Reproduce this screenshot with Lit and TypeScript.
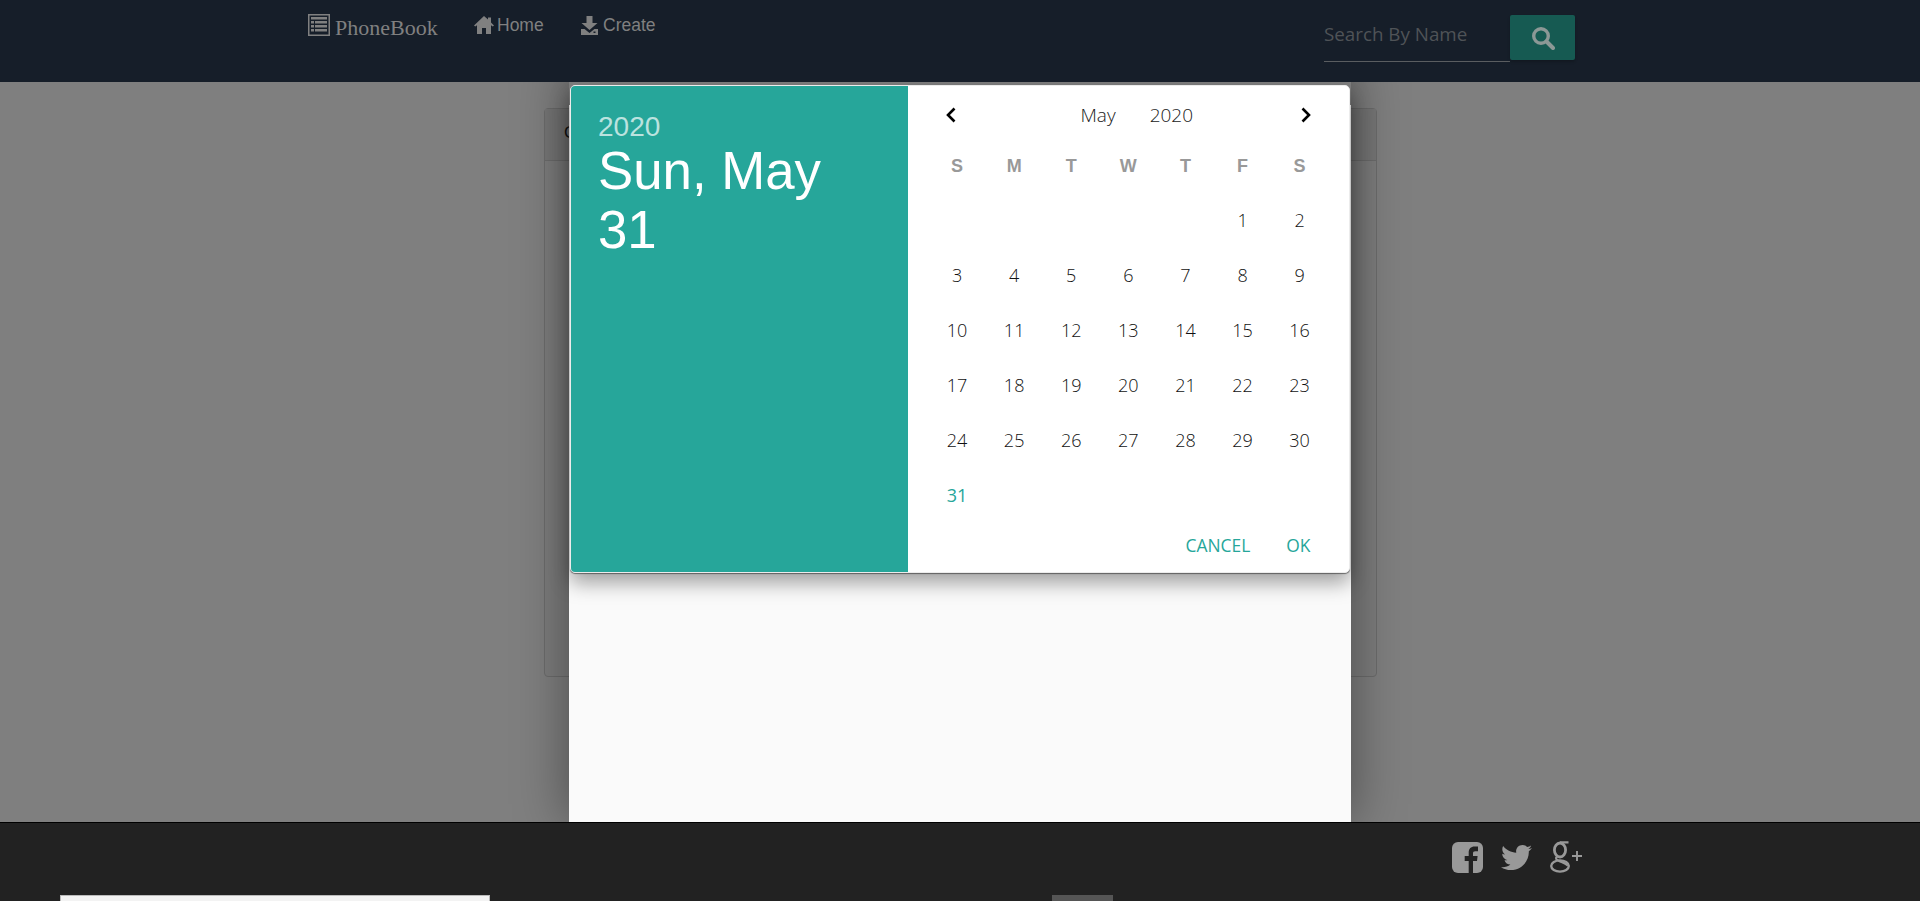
import { LitElement, html, css, svg } from 'lit'
import { customElement } from 'lit/decorators.js'

const WEEKDAYS = ['S', 'M', 'T', 'W', 'T', 'F', 'S']
const LEADING_BLANKS = 5
const DAYS_IN_MONTH = 31

const listIcon = svg`<path fill-rule="evenodd" d="M0 0h22v22H0zM1.5 1.5v19h19v-19zM3 3h16v2.5H3zM3 7h3v2.5H3zM7 7h12v2.5H7zM3 11h3v2.5H3zM7 11h12v2.5H7zM3 15h3v2.5H3zM7 15h12v2.5H7z"/>`
const homeIcon = svg`<path d="M10 0 L14 3.6 V1.5 H17 V6.4 L20 9.4 L18.8 10.6 L17 9.2 V18 H12 V12 H8 V18 H3 V9.2 L1.2 10.6 L0 9.4 Z"/>`
const downloadIcon = svg`<path fill-rule="evenodd" d="M5.5 0h6v7h5l-8 7-8-7h5zM0 13h3.5l5 4 5-4H17v6H0zM12.5 15.5h2v1.5h-2z"/>`
const searchIcon = svg`<circle cx="10" cy="10" r="7.3" fill="none" stroke="currentColor" stroke-width="3.4"/><path d="M15.5 15.5 L22 22" stroke="currentColor" stroke-width="4" stroke-linecap="round"/>`
const twitterIcon = svg`<path d="M459.37 151.716c.325 4.548.325 9.097.325 13.645 0 138.72-105.583 298.558-298.558 298.558-59.452 0-114.68-17.219-161.137-47.106 8.447.974 16.568 1.299 25.34 1.299 49.055 0 94.213-16.568 130.274-44.832-46.132-.975-84.792-31.188-98.112-72.772 6.498.974 12.995 1.624 19.818 1.624 9.421 0 18.843-1.3 27.614-3.573-48.081-9.747-84.143-51.98-84.143-102.985v-1.299c13.969 7.797 30.214 12.67 47.431 13.319-28.264-18.843-46.781-51.005-46.781-87.391 0-19.492 5.197-37.36 14.294-52.954 51.655 63.675 129.3 105.258 216.365 109.807-1.624-7.797-2.599-15.918-2.599-24.04 0-57.828 46.782-104.934 104.934-104.934 30.213 0 57.502 12.67 76.67 33.137 23.715-4.548 46.456-13.645 66.599-25.34-7.798 24.366-24.366 44.833-46.132 57.827 21.117-2.273 41.584-8.122 60.426-16.243-14.292 20.791-32.161 39.308-52.628 54.253z"/>`
const facebookIcon = svg`<rect width="31" height="31" rx="6" fill="#999"/><path d="M21 31V19h4l.6-5H21v-2.6c0-1.5.6-2.2 2.2-2.2H26V4.6C25.2 4.5 24 4.4 22.5 4.4c-3.6 0-5.8 2.2-5.8 6V14h-4v5h4v12z" fill="#222"/>`
const googleIcon = svg`<g fill="none" stroke="#999"><ellipse cx="10" cy="9" rx="5.6" ry="7" stroke-width="2.8"/><ellipse cx="10" cy="25" rx="8.8" ry="5.6" stroke-width="2.4"/><path d="M10 1.4h8.5M7 15.5c-2 2-.8 3.2 2.2 4.4 3 1.4 6.6 2.2 8.6 4.8" stroke-width="2.2"/><path d="M27 10v10M22 15h10" stroke-width="1.9"/></g>`

@customElement('app-root')
export class AppRoot extends LitElement {
  static styles = css`
    :host {
      display: block;
      height: 901px;
      overflow: hidden;
      font-family: 'Liberation Sans', Arial, sans-serif;
    }
    svg {
      display: block;
      fill: currentColor;
    }

    .navbar {
      position: relative;
      z-index: 2;
      height: 82px;
      background: #161e29;
      color: #808080;
      display: flex;
      align-items: flex-start;
      padding-left: 308px;
      box-sizing: border-box;
    }
    .brand {
      display: flex;
      align-items: flex-start;
      gap: 5px;
      width: 166px;
      margin-top: 14px;
      font: 22px/28px 'Liberation Serif', serif;
    }
    .nav-link {
      display: flex;
      align-items: center;
      font-size: 17.5px;
      margin-top: 14px;
      height: 22px;
    }
    .home {
      width: 107px;
      gap: 3px;
    }
    .create {
      gap: 4px;
    }
    .search {
      margin-left: auto;
      margin-right: 345px;
      margin-top: 15px;
      display: flex;
    }
    .search-input {
      width: 186px;
      height: 47px;
      box-sizing: border-box;
      border-bottom: 1px solid #5a5d60;
      padding: 5px 0 0 0;
      font: 18.8px/28px 'Open Sans', sans-serif;
      color: #4f5357;
    }
    .search-btn {
      width: 65px;
      height: 45px;
      background: #165a52;
      border-radius: 2px;
      color: #8c9896;
      display: flex;
      align-items: center;
      justify-content: center;
      box-shadow: 0 2px 3px rgba(0, 0, 0, 0.2);
    }

    .main {
      position: relative;
      height: 740px;
      background: #7f7f7f;
      padding: 26px 543px 0 544px;
      box-sizing: border-box;
    }
    .card {
      height: 569px;
      box-sizing: border-box;
      border: 1px solid #6c6c6c;
      border-radius: 4px;
      background: #7d7d7d;
    }
    .card-header {
      height: 52px;
      box-sizing: border-box;
      border-bottom: 1px solid #6c6c6c;
      background: #777;
      padding: 14px 19px;
      font-size: 17px;
      color: #111;
    }

    /* modal keeps only the shadow, so the picker corners show the dim page */
    .modal {
      position: absolute;
      left: 569px;
      top: -20px;
      width: 782px;
      height: 760px;
      box-shadow: 0 0 50px rgba(0, 0, 0, 0.42);
    }
    .sheet {
      position: absolute;
      left: 0;
      right: 0;
      top: 43px;
      bottom: 0;
      background: #fafafa;
    }
    .picker {
      position: absolute;
      left: 1px;
      top: 23px;
      width: 780px;
      height: 488px;
      box-sizing: border-box;
      display: flex;
      background: #fff;
      border: 1px solid #ececec;
      border-radius: 5px;
      overflow: hidden;
      box-shadow: 0 1px 1px rgba(0, 0, 0, 0.45), 0 10px 20px rgba(0, 0, 0, 0.36);
    }
    .date-panel {
      width: 337px;
      flex: none;
      background: #26a69a;
      color: #fff;
      padding: 25px 27px;
      box-sizing: border-box;
    }
    .year {
      font-size: 28px;
      line-height: 32px;
      color: rgba(255, 255, 255, 0.7);
    }
    .date-text {
      font-size: 52.8px;
      line-height: 59px;
      margin-top: -2px;
    }

    .calendar {
      flex: 1;
      padding: 0 20.5px;
      font-family: 'Open Sans', sans-serif;
      font-weight: 300;
      font-size: 18px;
      color: #111;
    }
    .cal-header {
      padding: 4px 16.5px 0 16px;
      height: 50px;
      display: flex;
      align-items: center;
      justify-content: space-between;
    }
    .month-year {
      display: flex;
      gap: 34px;
      font-size: 19px;
      color: #222;
      margin-left: 17px;
    }
    .grid {
      display: grid;
      grid-template-columns: repeat(7, 57.1px);
      grid-template-rows: 52px;
      grid-auto-rows: 55px;
      align-items: center;
      justify-items: center;
    }
    .weekday {
      font-family: 'Liberation Sans', sans-serif;
      font-weight: 700;
      color: #999;
    }
    .today {
      color: #26a69a;
      font-weight: 400;
    }
    .actions {
      display: flex;
      justify-content: flex-end;
      gap: 36px;
      padding-right: 18px;
      margin-top: 11px;
      color: #26a69a;
      font-weight: 400;
      font-size: 17.4px;
    }

    .footer {
      height: 79px;
      box-sizing: border-box;
      background: #222;
      border-top: 1px solid #000;
      position: relative;
      z-index: 2;
    }
    .social {
      display: flex;
      align-items: center;
      gap: 18px;
      padding: 18px 0 0 1452px;
      color: #999;
    }
    .strip {
      position: absolute;
      top: 72px;
      height: 6px;
    }
    .strip-light {
      left: 60px;
      width: 428px;
      background: #f3f3f3;
      border: 1px solid #bbb;
    }
    .strip-dark {
      left: 1052px;
      width: 61px;
      background: #555;
    }
  `

  private renderCalendar() {
    const blanks = Array.from({ length: LEADING_BLANKS }, () => html`<span></span>`)
    const days = Array.from({ length: DAYS_IN_MONTH }, (_, i) => {
      const day = i + 1
      return html`<span class=${day === DAYS_IN_MONTH ? 'today' : ''}>${day}</span>`
    })
    return html`
      <div class="grid">
        ${WEEKDAYS.map(d => html`<span class="weekday">${d}</span>`)}
        ${blanks}${days}
      </div>
    `
  }

  render() {
    return html`
      <header class="navbar">
        <div class="brand">
          <svg width="22" height="22" viewBox="0 0 22 22">${listIcon}</svg>
          PhoneBook
        </div>
        <div class="nav-link home">
          <svg width="20" height="19" viewBox="0 0 20 19">${homeIcon}</svg>Home
        </div>
        <div class="nav-link create">
          <svg width="18" height="19" viewBox="0 0 18 19">${downloadIcon}</svg>Create
        </div>
        <div class="search">
          <div class="search-input">Search By Name</div>
          <div class="search-btn">
            <svg width="24" height="24" viewBox="0 0 24 24">${searchIcon}</svg>
          </div>
        </div>
      </header>

      <main class="main">
        <div class="card">
          <div class="card-header">C</div>
        </div>
        <div class="modal">
          <div class="sheet"></div>
          <div class="picker">
            <div class="date-panel">
              <div class="year">2020</div>
              <div class="date-text">Sun, May<br />31</div>
            </div>
            <div class="calendar">
              <div class="cal-header">
                <svg width="12" height="16" viewBox="0 0 12 16"><path d="M9.5 1.5 L3 8 L9.5 14.5" fill="none" stroke="#000" stroke-width="2.6"/></svg>
                <div class="month-year"><span>May</span><span>2020</span></div>
                <svg width="12" height="16" viewBox="0 0 12 16"><path d="M2.5 1.5 L9 8 L2.5 14.5" fill="none" stroke="#000" stroke-width="2.6"/></svg>
              </div>
              ${this.renderCalendar()}
              <div class="actions"><span>CANCEL</span><span>OK</span></div>
            </div>
          </div>
        </div>
      </main>

      <footer class="footer">
        <div class="social">
          <svg width="31" height="31" viewBox="0 0 31 31">${facebookIcon}</svg>
          <svg width="31" height="31" viewBox="0 0 512 512">${twitterIcon}</svg>
          <svg width="33" height="33" viewBox="0 0 33 33">${googleIcon}</svg>
        </div>
        <div class="strip strip-light"></div>
        <div class="strip strip-dark"></div>
      </footer>
    `
  }
}
